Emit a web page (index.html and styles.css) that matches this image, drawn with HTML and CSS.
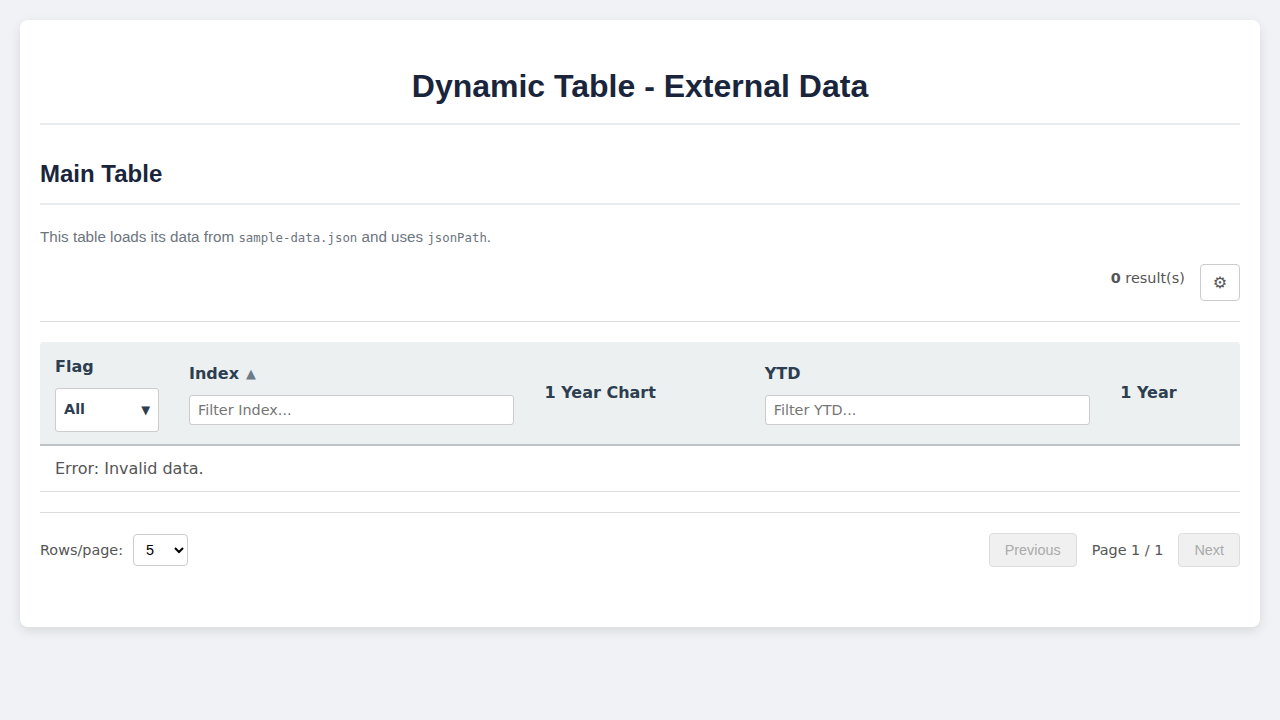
FILE: index.html
```html
<!DOCTYPE html>
<html lang="en">
<head>
<meta charset="utf-8">
<title>Dynamic Table - External Data</title>
<link rel="stylesheet" href="styles.css">
</head>
<body>
<main class="page">
  <h1>Dynamic Table - External Data</h1>
  <h2>Main Table</h2>
  <p class="intro">This table loads its data from <code>sample-data.json</code> and uses <code>jsonPath</code>.</p>
  <section class="widget">
    <div class="toolbar">
      <div class="count"><strong>0</strong> result(s)</div>
      <button class="gear" type="button">⚙</button>
    </div>
    <div class="grid head">
      <div class="cell"><span class="title">Flag</span><button class="multi" type="button"><span>All</span><span class="caret">▼</span></button></div>
      <div class="cell"><span class="title">Index <span class="sort">▲</span></span><input class="filter" placeholder="Filter Index..."></div>
      <div class="cell plain"><span class="title">1 Year Chart</span></div>
      <div class="cell"><span class="title">YTD</span><input class="filter" placeholder="Filter YTD..."></div>
      <div class="cell plain"><span class="title">1 Year</span></div>
    </div>
    <div class="error">Error: Invalid data.</div>
    <div class="footer">
      <label class="rows">Rows/page: <select class="select"><option>5</option><option>10</option></select></label>
      <div class="pager"><button disabled>Previous</button><span>Page 1 / 1</span><button disabled>Next</button></div>
    </div>
  </section>
</main>
</body>
</html>
```
FILE: styles.css
```css
* { box-sizing: border-box; }
body { margin: 0; padding: 20px; background: #f0f2f5; color: #555; font-family: "Liberation Sans", sans-serif; }
.page { height: 607px; padding: 20px; background: #fff; border-radius: 8px; box-shadow: 0 4px 12px rgba(0,0,0,.1); }
h1, h2 { margin: 0; color: #1a253c; border-bottom: 2px solid #e9ecef; }
h1 { height: 85px; padding-top: 27px; font-size: 32px; line-height: 38px; text-align: center; }
h2 { height: 80px; padding-top: 35px; font-size: 24px; line-height: 28px; }
.intro { margin: 20px 0 14px; font-size: 15.2px; line-height: 24px; color: #6c757d; }
code { font-family: "DejaVu Sans Mono", monospace; font-size: 12.35px; }
.widget { font-family: "DejaVu Sans", sans-serif; }
.toolbar { display: flex; justify-content: flex-end; align-items: flex-start; gap: 15.2px; height: 58px; border-bottom: 1px solid #ddd; margin-bottom: 20px; }
.count { font-size: 14.4px; line-height: 17px; padding-top: 6px; }
.gear { width: 40px; height: 37px; padding: 0; border: 1px solid #ccc; border-radius: 4px; background: #fff; color: #555; font: 16px "DejaVu Sans", sans-serif; }
.grid { display: grid; grid-template-columns: 134px 355.5px 220.25px 355.5px 134.75px; }
.head { height: 104px; align-items: center; background: #ecf0f1; border-bottom: 2px solid #bdc3c7; border-radius: 4px 4px 0 0; color: #2c3e50; font-weight: 700; }
.cell { padding: 2px 15px 0; display: flex; flex-direction: column; }
.plain { padding: 0 15px 1px; }
.title { height: 19px; font-size: 16px; line-height: 19px; }
.sort { display: inline-block; margin-left: 1.5px; font-size: 12.8px; line-height: 1; vertical-align: 1px; color: #6c7a89; }
.multi { display: flex; justify-content: space-between; align-items: center; height: 44px; margin-top: 12px; padding: 0 8px 2px; border: 1px solid #ccc; border-radius: 3px; background: #fff; color: #2c3e50; font: 700 14.4px "DejaVu Sans", sans-serif; }
.caret { font-size: 11.52px; padding-top: 2px; }
.filter { width: 325px; height: 30px; margin-top: 12px; padding: 0 8px; border: 1px solid #ccc; border-radius: 3px; font: 14.4px "DejaVu Sans", sans-serif; }
.error { height: 46px; padding: 0 15px; border-bottom: 1px solid #ddd; line-height: 45px; font-size: 16px; }
.footer { display: flex; justify-content: space-between; align-items: center; margin-top: 20px; padding-top: 20px; border-top: 1px solid #ddd; font-size: 14.4px; }
.rows { display: flex; align-items: center; gap: 10px; }
.select { width: 55px; height: 32px; padding: 0 8px; border: 1px solid #ccc; border-radius: 4px; background: #fff; color: #000; font: 14.4px "Liberation Sans", sans-serif; }
.pager { display: flex; align-items: center; gap: 15px; }
.pager button { height: 34px; padding: 0 15px; border: 1px solid #ddd; border-radius: 4px; background: #f0f0f0; color: #aaa; font: 14.4px "Liberation Sans", sans-serif; }
```
